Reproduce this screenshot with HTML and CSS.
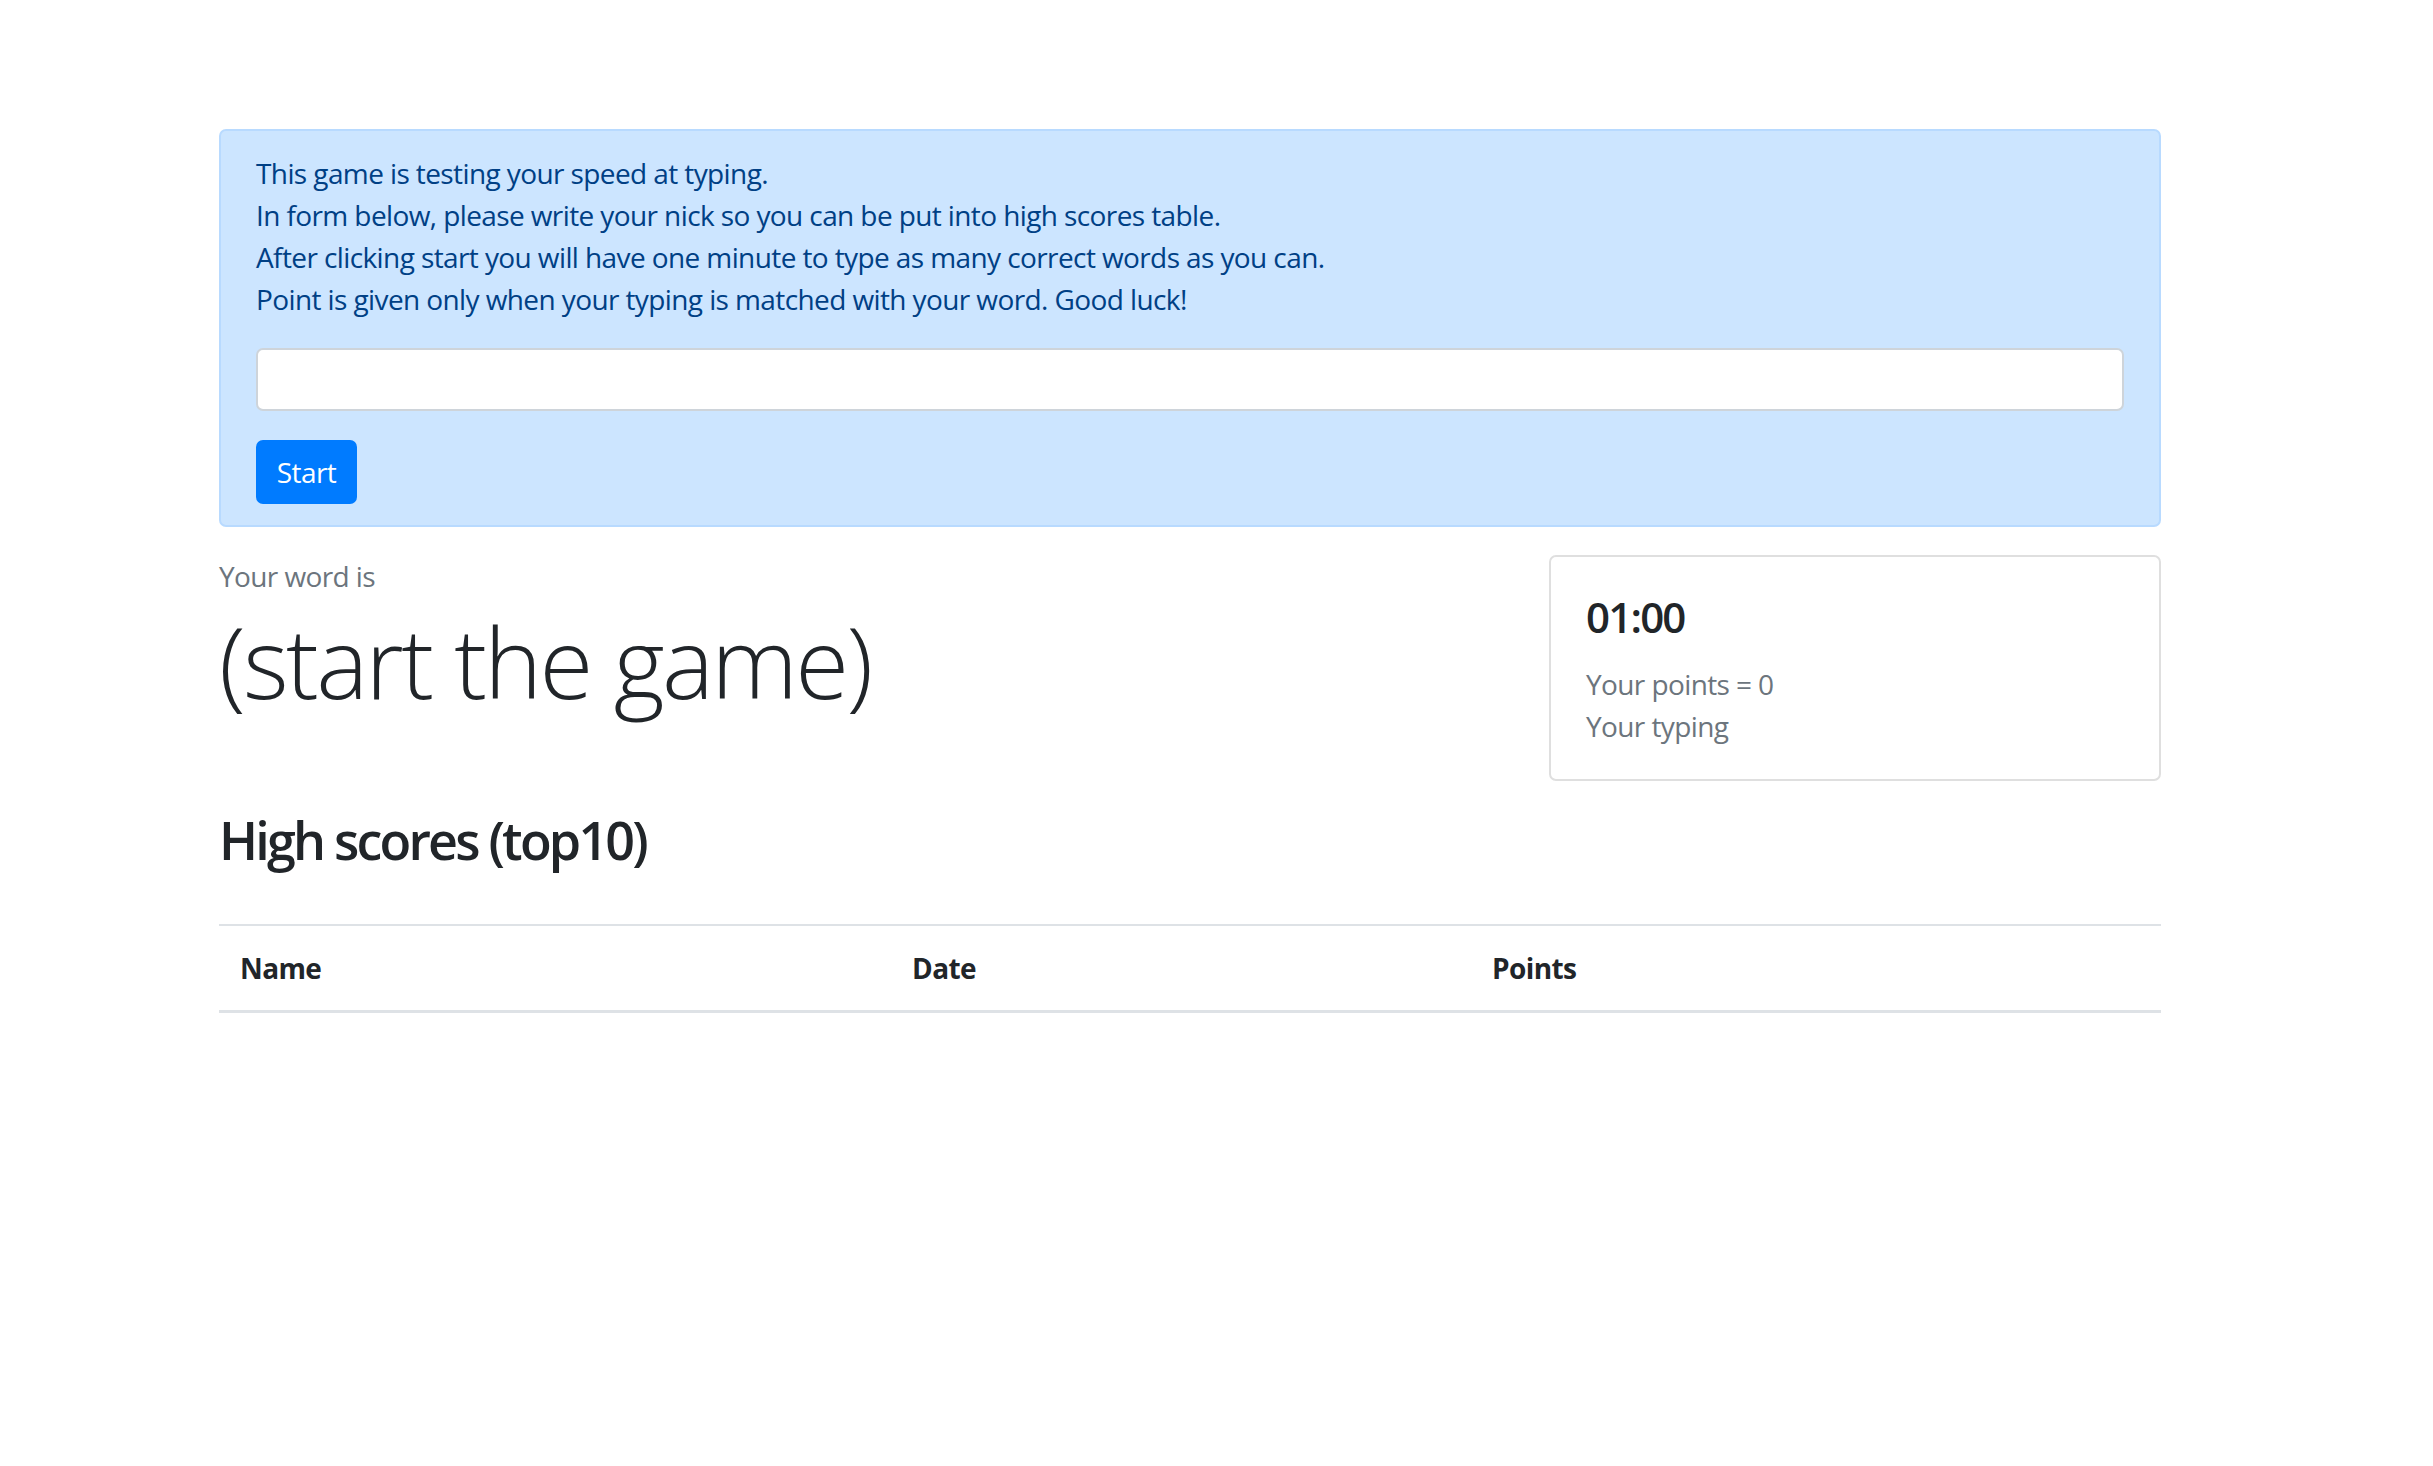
FILE: index.html
```html
<!DOCTYPE html>
<html lang="en">
<head>
<meta charset="utf-8">
<title>Typing game</title>
<link rel="stylesheet" href="styles.css">
</head>
<body>
<div class="container">
  <div class="alert">
    <p class="intro">This game is testing your speed at typing.<br>In form below, please write your nick so you can be put into high scores table.<br>After clicking start you will have one minute to type as many correct words as you can.<br>Point is given only when your typing is matched with your word. Good luck!</p>
    <input class="nick" type="text">
    <button class="btn" type="button">Start</button>
  </div>
  <div class="row">
    <div class="col-word">
      <p class="muted">Your word is</p>
      <p class="word">(start the game)</p>
    </div>
    <div class="col-card">
      <div class="card">
        <h4 class="timer">01:00</h4>
        <p class="muted">Your points = 0</p>
        <p class="muted">Your typing</p>
      </div>
    </div>
  </div>
  <h2 class="scores-title">High scores (top10)</h2>
  <table class="scores">
    <thead>
      <tr>
        <th class="c-name">Name</th>
        <th class="c-date">Date</th>
        <th class="c-points">Points</th>
      </tr>
    </thead>
    <tbody></tbody>
  </table>
</div>
</body>
</html>
```
FILE: styles.css
```css
html, body {
  margin: 0;
  padding: 0;
  background: #ffffff;
}
body {
  font-family: "Open Sans", "Noto Sans", sans-serif;
  font-size: 28px;
  line-height: 42px;
  letter-spacing: -0.6px;
  color: #212529;
}
p { margin: 0; }
.container {
  width: 1942px;
  margin-left: 219px;
  padding-top: 129px;
}
.alert {
  background: #cce5ff;
  border: 2px solid #b8daff;
  border-radius: 7px;
  padding: 21px 35px;
  color: #004085;
  margin-bottom: 28px;
}
.intro {
  margin-bottom: 28px;
}
.nick {
  display: block;
  box-sizing: border-box;
  width: 100%;
  height: 63px;
  border: 2px solid #ced4da;
  border-radius: 7px;
  background: #ffffff;
  margin: 0 0 29px 0;
  padding: 0 21px;
  font: inherit;
}
.btn {
  display: block;
  width: 101px;
  height: 64px;
  border: 0;
  border-radius: 7px;
  background: #007bff;
  color: #ffffff;
  font-family: inherit;
  font-size: 28px;
  line-height: 42px;
  letter-spacing: -0.6px;
  padding: 0;
}
.row {
  display: flex;
  align-items: flex-start;
}
.col-word {
  flex: 1;
}
.col-card {
  width: 612px;
}
.muted {
  color: #6c757d;
}
.word {
  font-size: 98px;
  line-height: 128px;
  font-weight: 300;
  letter-spacing: -2.6px;
  color: #212529;
}
.card {
  border: 2px solid #dfdfdf;
  border-radius: 7px;
  padding: 35px 35px 32px 35px;
}
.timer {
  margin: 0 0 21px 0;
  font-size: 42px;
  line-height: 50px;
  font-weight: 600;
  letter-spacing: -1.8px;
}
.scores-title {
  margin: 25px 0 51px 0;
  font-size: 52px;
  line-height: 67px;
  font-weight: 600;
  letter-spacing: -2.8px;
}
.scores {
  width: 100%;
  border-collapse: collapse;
}
.scores th {
  text-align: left;
  font-weight: 700;
  padding: 21px;
  border-top: 2px solid #dee2e6;
  border-bottom: 3px solid #dee2e6;
}
.c-name { width: 630px; }
.c-date { width: 538px; }
```
